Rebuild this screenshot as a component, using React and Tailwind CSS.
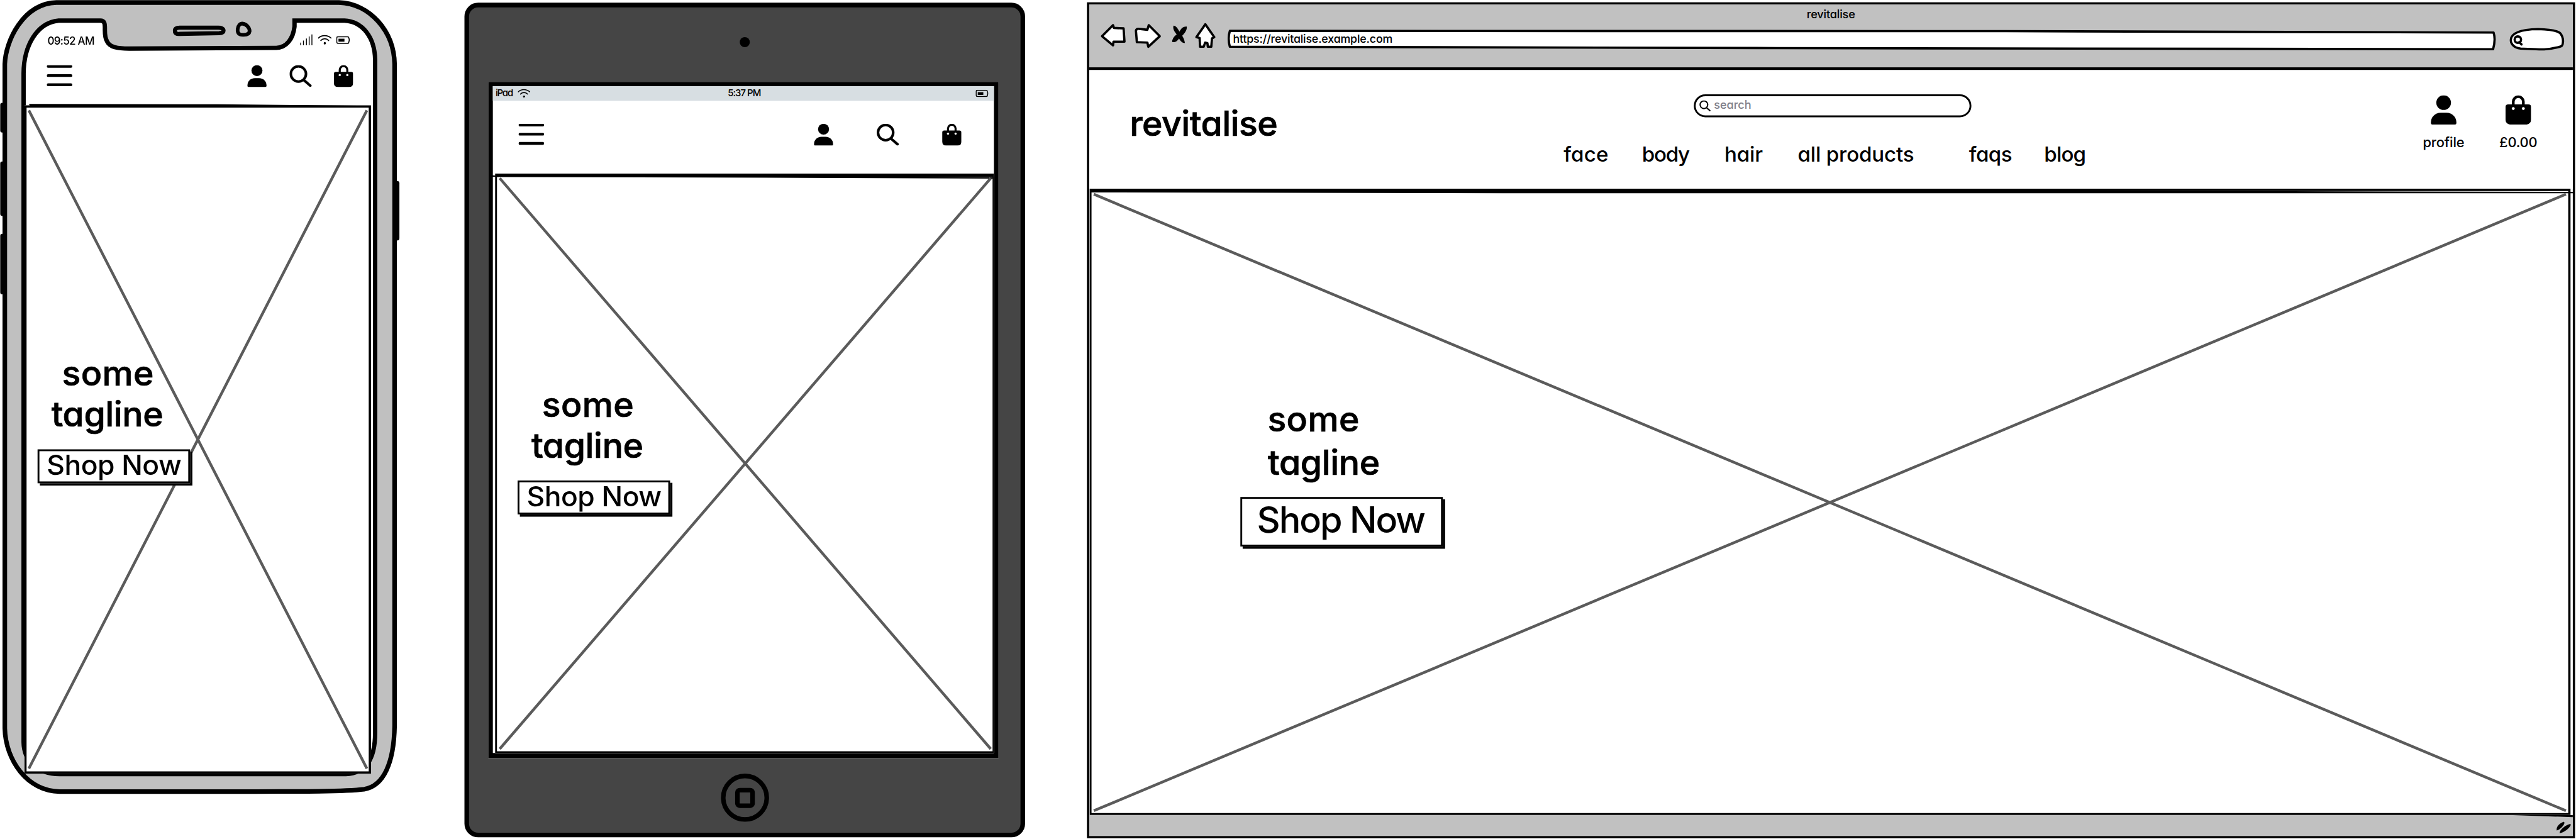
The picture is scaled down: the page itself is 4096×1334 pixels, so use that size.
import { useLayoutEffect, useRef } from "react";

/* Text whose letters are spaced so that the line is exactly `width` wide. */
function FitText({ width, className = "", children }) {
  const ref = useRef(null);
  useLayoutEffect(() => {
    const el = ref.current;
    el.style.letterSpacing = "0px";
    const size = parseFloat(getComputedStyle(el).fontSize);
    const gap = (width + size * 0.1 - el.offsetWidth) / (children.length - 1);
    el.style.letterSpacing = `${gap}px`;
    el.style.marginLeft = `${-size * 0.05}px`;
  }, [width, children]);
  return (
    <div className={`shrink-0 whitespace-nowrap ${className}`} style={{ width }}>
      <span ref={ref} className="inline-block">
        {children}
      </span>
    </div>
  );
}

const PersonIcon = ({ className }) => (
  <svg viewBox="0 0 56 64" className={className}>
    <circle cx="28" cy="16" r="16" />
    <path d="M0 60C0 48 9 38 22 38H34C47 38 56 48 56 60Q56 64 52 64H4Q0 64 0 60Z" />
  </svg>
);

const BagIcon = ({ className }) => (
  <svg viewBox="0 0 56 64" className={className}>
    <path d="M17 24V14a11 11 0 0 1 22 0V24" fill="none" stroke="#000" strokeWidth="6" />
    <path d="M6 20H50Q56 20 56 26V52Q56 64 44 64H12Q0 64 0 52V26Q0 20 6 20Z" />
    <circle cx="17" cy="29" r="3.2" fill="#fff" />
    <circle cx="39" cy="29" r="3.2" fill="#fff" />
  </svg>
);

const SearchIcon = ({ className }) => (
  <svg viewBox="0 0 49 48" className={className} fill="none" stroke="#000" strokeWidth="5.6" strokeLinecap="round">
    <circle cx="19.5" cy="19.5" r="16.6" />
    <path d="M31 32.500L45.500 45" />
  </svg>
);

const MenuIcon = () => (
  <svg viewBox="0 0 56 48" className="h-[48px] w-[56px]" stroke="#000" strokeWidth="6" strokeLinecap="round">
    <path d="M3 3H53M3 23H53M3 43H53" />
  </svg>
);

const WifiIcon = ({ className }) => (
  <svg viewBox="0 0 30 22" className={className} fill="none" stroke="#000" strokeWidth="2.400" strokeLinecap="round">
    <path d="M1.500 7C8 0 21 0 28.500 7M6.500 12.500C11 7.500 19 7.500 23.500 12.500" />
    <ellipse cx="15" cy="18.500" rx="1.600" ry="2" fill="#000" strokeWidth="1.500" />
  </svg>
);

const BatteryIcon = ({ className }) => (
  <svg viewBox="0 0 30 17" className={className} fill="none" stroke="#000" strokeWidth="2.200">
    <path d="M4 1.200H24Q27.500 1 27.500 4Q29.500 8 27.500 13Q27.500 15.800 24 15.800H4Q1.200 15.800 1.200 12V4Q1.200 1.200 4 1.200Z" />
    <rect x="5" y="5.500" width="13" height="6.500" fill="#000" stroke="none" />
  </svg>
);

const Cross = ({ box, d, className }) => (
  <svg viewBox={box} preserveAspectRatio="none" className={`absolute ${className}`}>
    <path d={d} stroke="#5b5b5b" strokeWidth="6" fill="none" />
  </svg>
);

function ShopButton({ big }) {
  return big ? (
    <button className="relative flex h-[108px] w-[442px] items-start border-4 border-black bg-white pl-[36px] text-left shadow-[5px_5px_0_#000]">
      <FitText width={361} className="text-[79px] leading-[90px]">
        Shop Now
      </FitText>
    </button>
  ) : (
    <button className="relative flex h-[74px] w-[333px] items-start border-4 border-black bg-white pl-[19px] text-left shadow-[5px_5px_0_#000]">
      <FitText width={288} className="text-[61px] leading-[61px]">
        Shop Now
      </FitText>
    </button>
  );
}

function MobileHeroCopy({ className }) {
  return (
    <div className={`relative ${className}`}>
      <FitText width={193} className="ml-[57px] text-[76px] leading-[88.500px] [-webkit-text-stroke:1px_#000]">
        some
      </FitText>
      <FitText width={237} className="ml-[34px] text-[76px] leading-[88.500px] [-webkit-text-stroke:1px_#000]">
        tagline
      </FitText>
      <div className="mt-[34px]">
        <ShopButton />
      </div>
    </div>
  );
}

const PhoneFrame = () => (
  <svg viewBox="0 0 873 1734" className="absolute inset-0 h-full w-full" fill="none" stroke="#000">
    <path d="M5 229V285M5 357V467M5 515V638" strokeWidth="9" strokeLinecap="round" />
    <path d="M867 400V520" strokeWidth="10" strokeLinecap="round" />
    <path
      d="M123 5.500H740C808 8 860 68 861.500 140V1585C860 1665 838 1716 795 1723C740 1730 640 1727 560 1728H130C60 1727 12 1660 10.500 1590V140C12 90 50 8 123 5.500Z"
      fill="#c0c0c0"
      strokeWidth="10"
    />
    <path
      d="M128 45H218C238 44 222 72 234 91C240 103 256 106 282 106L603 104.500C626 104 640 84 643 58V45H752C792 47 818 82 819 130V1600C819 1655 800 1688 755 1690H130C80 1690 52 1660 51.500 1620V160C52 100 80 50 128 45Z"
      fill="#fff"
      strokeWidth="9.500"
    />
    <path d="M392 60.500H475Q488 60 488 67Q488 72 478 72.500L392 74Q382 75 382 68Q381 60.500 392 60.500Z" strokeWidth="9" />
    <path d="M529 51.500C538 52 545 61 545 68C544 75 538 76.500 530 76C520 76 518 70 519 63C520 56 524 51.500 529 51.500Z" strokeWidth="8" />
  </svg>
);

function Phone() {
  return (
    <section className="relative h-[1734px] w-[873px] shrink-0">
      <PhoneFrame />
      <div className="relative ml-[53px] flex w-[757px] flex-col pt-[75px]">
        <div className="flex h-[30px] items-start justify-between pr-[46px] pl-[52px]">
          <FitText width={100} className="text-[23.500px] leading-[30px]">
            09:52 AM
          </FitText>
          <div className="flex items-start">
            <svg viewBox="0 0 28 24" className="h-[24px] w-[28px]" stroke="#000" strokeWidth="1.900">
              <path d="M1.500 18V24M7.500 13.500V24M14 9V24M20 4.500V24M26 0V24" />
            </svg>
            <WifiIcon className="mt-[1px] ml-[11px] h-[22px] w-[30px]" />
            <BatteryIcon className="mt-[4px] ml-[10px] h-[17px] w-[30px]" />
          </div>
        </div>
        <div className="mt-[37px] flex h-[48px] pr-[39px] pl-[49px]">
          <MenuIcon />
          <PersonIcon className="ml-auto h-[48px] w-[42px]" />
          <SearchIcon className="ml-[50px] h-[48px] w-[49px]" />
          <BagIcon className="ml-[48px] h-[48px] w-[42px]" />
        </div>
        <div className="relative mt-[40px] h-[1459px] border-5 border-black bg-white">
          <svg viewBox="0 0 757 8" className="absolute -top-[9px] -left-[5px] h-[8px] w-[757px]">
            <path d="M10 1L420 1.500L757 5V8H14Z" />
          </svg>
          <Cross box="0 0 747 1449" d="M5 6L743 1443M743 6L5 1443" className="inset-0 h-full w-full" />
          <MobileHeroCopy className="mt-[535px] ml-[24px]" />
        </div>
      </div>
    </section>
  );
}

function Tablet() {
  return (
    <section className="mt-[6px] ml-[141px] flex h-[1822px] w-[1224px] shrink-0 flex-col rounded-[30px] border-10 border-black bg-[#454545]">
      <div className="mt-[65px] h-[22px] w-[22px] self-center rounded-full bg-black" />
      <div className="mt-[76px] ml-[42px] flex h-[1476px] w-[1114px] flex-col border-x-10 border-t-9 border-b-11 border-black bg-white">
        <div className="flex h-[32px] shrink-0 items-start bg-[#d7dee2] pl-[7px]">
          <FitText width={37} className="text-[20.500px] leading-[29px]">
            iPad
          </FitText>
          <WifiIcon className="mt-[6px] ml-[10px] h-[20px] w-[28px]" />
          <FitText width={71} className="ml-[432px] text-[20.500px] leading-[29px]">
            5:37 PM
          </FitText>
          <BatteryIcon className="mt-[8px] mr-[12px] ml-auto h-[16px] w-[28px]" />
        </div>
        <div className="mt-[50px] flex h-[48px] shrink-0 pr-[71px] pl-[56px]">
          <MenuIcon />
          <PersonIcon className="ml-auto h-[48px] w-[42px]" />
          <SearchIcon className="ml-[95px] h-[48px] w-[49px]" />
          <BagIcon className="ml-[94px] h-[48px] w-[42px]" />
        </div>
        <div className="relative mt-[61px] ml-[5px] flex-1 border-t-7 border-r-3 border-b-4 border-l-4 border-black bg-white">
          <svg viewBox="0 0 1100 12" className="absolute -top-[4px] -left-[15px] h-[12px] w-[1100px]">
            <path d="M0 0L20 2L600 2L1100 5V8L600 6L0 4Z" />
          </svg>
          <Cross box="0 0 1082 1254" d="M6 3L1078 1249M1078 3L6 1249" className="inset-0 h-full w-full" />
          <MobileHeroCopy className="mt-[452px] ml-[45px]" />
        </div>
      </div>
      <div className="mt-[34px] flex h-[105px] w-[105px] items-center justify-center self-center rounded-full border-10 border-black">
        <div className="h-[44px] w-[43px] rounded-[10px] border-10 border-black" />
      </div>
    </section>
  );
}

const BrowserChrome = () => (
  <div className="h-[143px] shrink-0 border-b-6 border-black bg-[#c1c1c1]">
    <div className="flex h-[40px] items-start justify-center">
      <FitText width={104} className="text-[25px] leading-[42px]">
        revitalise
      </FitText>
    </div>
    <div className="flex items-start pl-[25px]">
      <svg viewBox="0 0 55 56" className="h-[56px] w-[55px]" fill="#fff" stroke="#000" strokeWidth="5" strokeLinejoin="round">
        <path d="M27 5L3 29L27 49L28 41H52L50 12L29 11Z" />
      </svg>
      <svg viewBox="0 0 58 56" className="ml-[19px] h-[56px] w-[58px]" fill="#fff" stroke="#000" strokeWidth="5" strokeLinejoin="round">
        <path d="M31 5L55 29L30 52L28 43L5 42L3 17Q4 12 10 13L28 15Z" />
      </svg>
      <svg viewBox="0 0 33 56" className="ml-[24px] h-[56px] w-[33px]">
        <path d="M3 6C8 6 13 13 16 19C20 11 25 7 32 8C33 16 27 23 22 28C25 33 27 38 28 44C22 44 18 39 15 34C12 39 7 43 0 42C0 35 5 29 10 25C5 19 1 13 3 6Z" />
      </svg>
      <svg viewBox="0 0 45 56" className="ml-[17px] h-[56px] w-[45px]" fill="#fff" stroke="#000" strokeWidth="5" strokeLinejoin="round">
        <path d="M22.500 3L42 31L37 34L35.500 52H28L27 44L22 43L19 52H11L10 33L3 31Z" />
      </svg>
      <div className="relative ml-[26px] flex h-[60px] w-[2770px] items-start pl-[13px]">
        <svg viewBox="0 0 2770 60" className="absolute inset-0 h-[60px] w-[2770px]">
          <path
            d="M5 17.500L1700 18L2764 21Q2769 36 2763 57.500L1200 55L5 52Q0 34 5 17.500Z"
            fill="#fff"
            stroke="#000"
            strokeWidth="5"
            strokeLinejoin="round"
          />
        </svg>
        <FitText width={346} className="relative mt-[14px] text-[24.500px] leading-[42px]">
          https://revitalise.example.com
        </FitText>
      </div>
      <svg viewBox="0 0 120 64" className="ml-[29px] h-[64px] w-[120px]" fill="#fff" stroke="#000" strokeWidth="5" strokeLinecap="round" strokeLinejoin="round">
        <path d="M24 56C6 54 2 42 2.500 37C4 22 24 14 62 13.500C88 14 105 17 111 23C116 30 117 37 116.500 42C116 52 112 51 106 53C80 60 66 58 24 56Z" />
        <circle cx="18" cy="36.500" r="7" />
        <path d="M21 42L26 47" />
      </svg>
    </div>
  </div>
);

const NAV = [
  { label: "face", width: 93, space: "" },
  { label: "body", width: 100, space: "ml-[78px]" },
  { label: "hair", width: 80, space: "ml-[80px]" },
  { label: "all products", width: 250, space: "ml-[80px]" },
  { label: "faqs", width: 90, space: "ml-[124px]" },
  { label: "blog", width: 87, space: "ml-[74px]" },
];

const SiteHeader = () => (
  <header className="flex h-[259px] shrink-0 items-start bg-white pl-[92px]">
    <FitText width={316} className="mt-[71px] text-[76px] leading-[90px] [-webkit-text-stroke:1px_#000]">
      revitalise
    </FitText>
    <div className="mt-[53px] ml-[630px] w-[1136px] shrink-0">
      <div className="ml-[282px] flex h-[50px] w-[606px] items-start rounded-full border-4 border-black pl-[8px]">
        <SearchIcon className="mt-[9px] h-[24px] w-[25px]" />
        <FitText width={79} className="ml-[8px] text-[25px] leading-[38px] text-[#80808a]">
          search
        </FitText>
      </div>
      <nav className="mt-[56px] flex">
        {NAV.map(({ label, width, space }) => (
          <div key={label} className={space}>
            <FitText width={width} className="text-[45.500px] leading-[50px]">
              {label}
            </FitText>
          </div>
        ))}
      </nav>
    </div>
    <div className="mt-[55px] ml-[739px] flex flex-col items-center">
      <PersonIcon className="h-[64px] w-[56px]" />
      <FitText width={88} className="mt-[20px] text-[30px] leading-[36px]">
        profile
      </FitText>
    </div>
    <div className="mt-[55px] ml-[79px] flex flex-col items-center">
      <BagIcon className="h-[64px] w-[56px]" />
      <FitText width={80} className="mt-[20px] text-[30px] leading-[36px]">
        £0.00
      </FitText>
    </div>
  </header>
);

function Browser() {
  return (
    <section className="mt-[5px] ml-[135px] flex h-[1825px] w-[3249px] shrink-0 flex-col border-5 border-black bg-white">
      <BrowserChrome />
      <SiteHeader />
      <div className="relative mr-[5px] ml-[1px] flex-1 border-5 border-b-4 border-l-4 border-black bg-white">
        <svg viewBox="0 0 3236 10" className="absolute -top-[3px] -left-[4px] h-[10px] w-[3242px]">
          <path d="M0 0H1400L3236 5V8H2400L900 8L0 6Z" />
        </svg>
        <Cross box="0 0 3224 1358" d="M5 7L3219 1353M3219 7L5 1353" className="inset-0 h-full w-full" />
        <div className="relative pt-[450px]">
          <FitText width={193} className="ml-[388px] text-[76px] leading-[94.500px] [-webkit-text-stroke:1px_#000]">
            some
          </FitText>
          <FitText width={237} className="ml-[389px] text-[76px] leading-[94.500px] [-webkit-text-stroke:1px_#000]">
            tagline
          </FitText>
          <div className="mt-[29px] ml-[325px]">
            <ShopButton big />
          </div>
        </div>
      </div>
      <footer className="flex h-[46px] shrink-0 justify-end bg-[#c1c1c1]">
        <svg viewBox="0 0 140 46" className="h-[46px] w-[140px]">
          <path d="M0 0H140V5Z" />
          <path d="M105 34C103 26 112 18 120 15L122 17C120 25 112 32 105 34ZM111 40C112 31 124 23 133 20L136 21C133 30 120 39 111 40Z" />
        </svg>
      </footer>
    </section>
  );
}

export default function App() {
  return (
    <div className="h-[1334px] w-[4096px] overflow-hidden bg-white">
      <main className="flex h-[1832px] w-[5624px] origin-top-left scale-[0.72831] items-start font-['Inter',sans-serif] font-medium text-black [font-feature-settings:'cv11'_1]">
        <Phone />
        <Tablet />
        <Browser />
      </main>
    </div>
  );
}
